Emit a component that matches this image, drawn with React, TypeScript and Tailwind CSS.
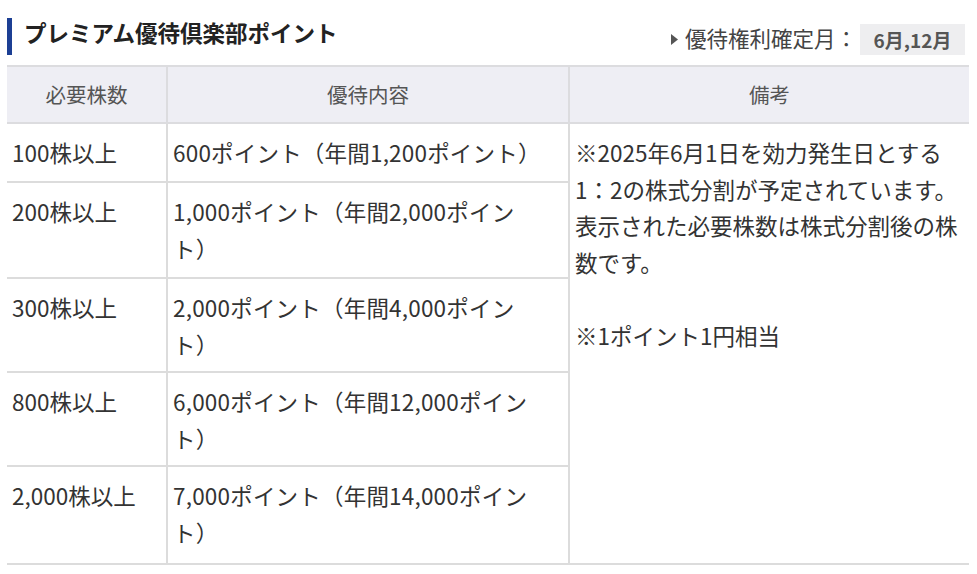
import React from "react";

const font = { fontFamily: '"Noto Sans CJK JP", "Noto Sans", sans-serif' };

const rows: { n: string; c: React.ReactNode; h: string }[] = [
  { n: "100株以上", c: "600ポイント（年間1,200ポイント）", h: "h-[59px]" },
  { n: "200株以上", c: <>1,000ポイント（年間2,000ポイン<br />ト）</>, h: "h-[96px]" },
  { n: "300株以上", c: <>2,000ポイント（年間4,000ポイン<br />ト）</>, h: "h-[94px]" },
  { n: "800株以上", c: <>6,000ポイント（年間12,000ポイン<br />ト）</>, h: "h-[94px]" },
  { n: "2,000株以上", c: <>7,000ポイント（年間14,000ポイン<br />ト）</>, h: "h-[98px]" },
];

export default function App() {
  return (
    <div className="w-[977px] h-[574px] bg-white overflow-hidden" style={font}>
      <div className="flex items-start justify-between pl-[7px] pr-[12px] pt-[18px] h-[65px]">
        <div className="flex items-center h-[37px]">
          <div className="w-[5px] h-[37px] bg-[#1c3f94]" />
          <div className="ml-[12px] text-[22.5px] font-semibold text-[#222] leading-none -mt-[9px]">
            プレミアム優待倶楽部ポイント
          </div>
        </div>
        <div className="flex items-center mt-[6px]">
          <svg width="9" height="13" viewBox="0 0 9 13" className="mr-[6px]">
            <path d="M1 1 L8 6.5 L1 12 Z" fill="#555" />
          </svg>
          <span className="text-[21.5px] text-[#444] leading-none -mt-[3px]">優待権利確定月：</span>
          <span className="ml-[3px] bg-[#eeeef0] h-[31px] w-[105px] flex items-center justify-center text-[19px] font-bold text-[#555] leading-none">
            6月,12月
          </span>
        </div>
      </div>
      <table className="ml-[7px] w-[962px] border-collapse table-fixed text-[#333]">
        <colgroup>
          <col className="w-[160px]" />
          <col className="w-[402px]" />
          <col className="w-[400px]" />
        </colgroup>
        <thead>
          <tr className="h-[57px] bg-[#eeeef4]">
            <th className="border-2 border-l-0 border-[#dcdcdf] text-center align-middle font-normal text-[20.5px] text-[#555]">必要株数</th>
            <th className="border-2 border-[#dcdcdf] text-center align-middle font-normal text-[20.5px] text-[#555]">優待内容</th>
            <th className="border-2 border-r-0 border-[#dcdcdf] text-center align-middle font-normal text-[20.5px] text-[#555]">備考</th>
          </tr>
        </thead>
        <tbody className="text-[22.5px] leading-[36.5px]">
          {rows.map((r, i) => (
            <tr key={r.n} className={r.h}>
              <td className="border-2 border-l-0 border-[#dcdcdc] align-top pt-[10px] pl-[5px] whitespace-nowrap">{r.n}</td>
              <td className="border-2 border-[#dcdcdc] align-top pt-[10px] pl-[5px] whitespace-nowrap tracking-[0.2px]">{r.c}</td>
              {i === 0 && (
                <td rowSpan={5} className="border-2 border-r-0 border-[#dcdcdc] align-top pt-[10px] pl-[5px] whitespace-nowrap">
                  ※2025年6月1日を効力発生日とする<br />
                  1：2の株式分割が予定されています。<br />
                  表示された必要株数は株式分割後の株<br />
                  数です。<br />
                  <br />
                  ※1ポイント1円相当
                </td>
              )}
            </tr>
          ))}
        </tbody>
      </table>
    </div>
  );
}
